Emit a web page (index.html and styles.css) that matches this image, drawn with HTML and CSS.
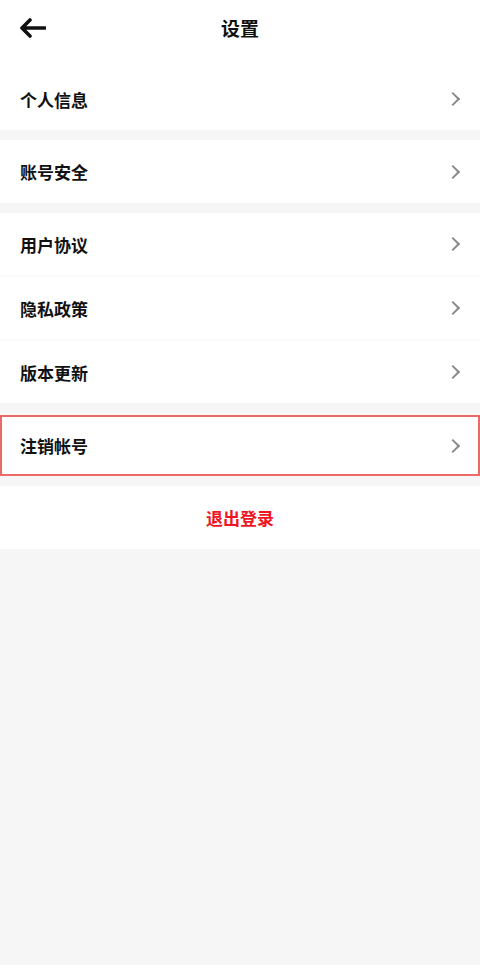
FILE: index.html
```
<!DOCTYPE html>
<html lang="zh-CN">
<head>
<meta charset="utf-8">
<title>设置</title>
<link rel="stylesheet" href="styles.css">
</head>
<body>
<div class="page">
  <header class="topbar">
    <span class="back">
      <svg width="28" height="22" viewBox="0 0 28 22"><path d="M12 3 L4 11 L12 19 M4 11 H27" fill="none" stroke="#111" stroke-width="3.6" stroke-linecap="round" stroke-linejoin="round"/></svg>
    </span>
    <h1 class="title">设置</h1>
  </header>
  <div class="group first">
    <div class="row"><span>个人信息</span><i class="chev"></i></div>
  </div>
  <div class="group second">
    <div class="row"><span>账号安全</span><i class="chev"></i></div>
  </div>
  <div class="group">
    <div class="row"><span>用户协议</span><i class="chev"></i></div>
    <div class="row"><span>隐私政策</span><i class="chev"></i></div>
    <div class="row"><span>版本更新</span><i class="chev"></i></div>
  </div>
  <div class="group">
    <div class="row highlight"><span>注销帐号</span><i class="chev"></i></div>
  </div>
  <div class="group">
    <div class="logout">退出登录</div>
  </div>
</div>
</body>
</html>
```
FILE: styles.css
```
* { box-sizing: border-box; margin: 0; padding: 0; }
html, body { background: #f6f6f6; }
body {
  font-family: "Noto Sans CJK SC", "Noto Sans", sans-serif;
  color: #111;
}
.page { display: flex; flex-direction: column; gap: 10px; }
.topbar {
  height: 60px;
  background: #fff;
  display: flex;
  align-items: center;
  justify-content: center;
  position: relative;
  margin-bottom: -10px;
}
.back { position: absolute; left: 18px; top: 17px; display: flex; }
.title { font-size: 19px; font-weight: 700; line-height: 1; margin-top: -5px; }
.group { display: flex; flex-direction: column; gap: 2px; background: #f9f9f9; }
.row {
  height: 62px;
  background: #fff;
  display: flex;
  align-items: center;
  justify-content: space-between;
  padding: 0 22px 0 20px;
  font-size: 17px;
  font-weight: 700;
}
.first .row { height: 70px; padding-top: 8px; }
.second .row { height: 63px; }
.row span { line-height: 1; }
.chev {
  width: 10px; height: 10px;
  border-top: 2px solid #8a8a8a;
  border-right: 2px solid #8a8a8a;
  transform: rotate(45deg);
}
.highlight { border: 2px solid #ee6868; height: 61px; padding-left: 18px; padding-right: 20px; margin-top: 2px; }
.logout {
  height: 63px;
  background: #fff;
  display: flex;
  align-items: center;
  justify-content: center;
  color: #f0141e;
  font-size: 17px;
  font-weight: 700;
}
```
